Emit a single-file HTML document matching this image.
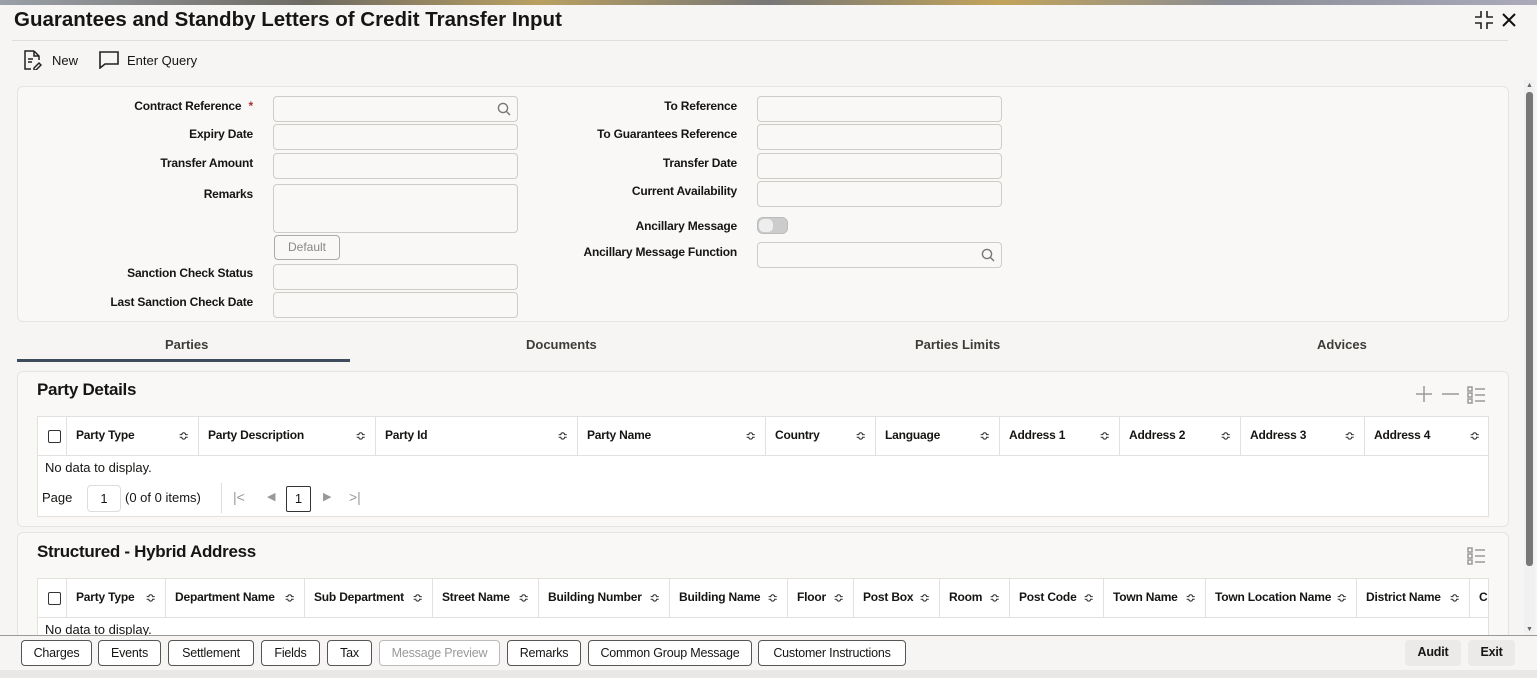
<!DOCTYPE html>
<html><head><meta charset="utf-8"><style>
*{box-sizing:border-box;margin:0;padding:0}
body{width:1537px;height:678px;overflow:hidden;background:#f6f5f3;font-family:"Liberation Sans",sans-serif;color:#161513;position:relative;font-size:12.5px}
.a{position:absolute}
.top{left:0;top:0;width:1537px;height:5px;background:linear-gradient(90deg,#9aa0a8,#6d6a62 20%,#b9a061 35%,#777 50%,#c2a35a 65%,#8a8d94 80%,#aab)}
h1{position:absolute;left:14px;top:8px;font-size:20.5px;font-weight:bold;letter-spacing:0;color:#161513}
.panel{position:absolute;background:#f9f8f6;border:1px solid #e6e4e0;border-radius:6px}
.lbl{position:absolute;text-align:right;font-weight:bold;font-size:12px;letter-spacing:-0.2px;white-space:nowrap}
.inp{position:absolute;background:#f9f8f6;border:1px solid #cfccc7;border-radius:4px;height:26px}
.tab{position:absolute;top:337px;font-weight:bold;font-size:13px;color:#3f3c38}
.tbl{position:absolute;background:#fff;border:1px solid #e3e1dd}
.th{position:absolute;top:0;height:38px;border-right:1px solid #e3e1dd;font-weight:bold;font-size:12px;letter-spacing:-0.2px;line-height:37px;padding-left:9px;white-space:nowrap;overflow:hidden}
.sort{position:absolute;right:9px;top:0;font-size:13px;color:#333;font-weight:normal}
.btn{position:absolute;top:640px;height:26px;border:1px solid #555;border-radius:4px;background:#fff;font-size:12.5px;text-align:center;line-height:24px;letter-spacing:-0.2px}
.cb{position:absolute;width:13px;height:13px;border:1.5px solid #333;border-radius:2px;background:#fff}
</style></head><body>
<div class="a top"></div>
<h1>Guarantees and Standby Letters of Credit Transfer Input</h1>
<svg class="a" style="left:1474px;top:10px" width="20" height="20" viewBox="0 0 20 20" fill="none" stroke="#222" stroke-width="1.6"><path d="M7 1v6H1M13 1v6h6M7 19v-6H1M13 19v-6h6"/></svg>
<svg class="a" style="left:1502px;top:13px" width="14" height="14" viewBox="0 0 14 14" stroke="#111" stroke-width="2"><path d="M1 1l12 12M13 1L1 13"/></svg>
<div class="a" style="left:12px;top:40px;width:1496px;height:1px;background:#e0deda"></div>
<svg class="a" style="left:22px;top:50px" width="20" height="20" viewBox="0 0 20 20" fill="none" stroke="#222" stroke-width="1.5"><path d="M12 1H3v18h6M12 1l5 5v4M12 1v5h5M6 9h5M6 12h4M12 18l5-5 2 2-5 5h-2z"/></svg>
<div class="a" style="left:52px;top:53px;font-size:13px">New</div>
<svg class="a" style="left:99px;top:51px" width="20" height="18" viewBox="0 0 20 18" fill="none" stroke="#222" stroke-width="1.6"><path d="M1 1h18v12H6l-5 4z"/></svg>
<div class="a" style="left:127px;top:53px;font-size:13px">Enter Query</div>

<div class="panel" style="left:17px;top:86px;width:1492px;height:236px"></div>
<div class="lbl" style="right:1284px;top:99px">Contract Reference <span style="color:#a33;margin-left:4px">*</span></div>
<div class="lbl" style="right:1284px;top:127px">Expiry Date</div>
<div class="lbl" style="right:1284px;top:156px">Transfer Amount</div>
<div class="lbl" style="right:1284px;top:187px">Remarks</div>
<div class="lbl" style="right:1284px;top:266px">Sanction Check Status</div>
<div class="lbl" style="right:1284px;top:295px">Last Sanction Check Date</div>
<div class="inp" style="left:273px;top:96px;width:245px"></div>
<svg class="a" style="left:497px;top:102px" width="14" height="14" viewBox="0 0 14 14" fill="none" stroke="#777" stroke-width="1.4"><circle cx="6" cy="6" r="4.6"/><path d="M9.5 9.5L13 13"/></svg>
<div class="inp" style="left:273px;top:124px;width:245px"></div>
<div class="inp" style="left:273px;top:153px;width:245px"></div>
<div class="inp" style="left:273px;top:184px;width:245px;height:49px"></div>
<div class="a" style="left:274px;top:235px;width:66px;height:25px;border:1px solid #aaa;border-radius:4px;color:#888;font-size:12px;text-align:center;line-height:23px">Default</div>
<div class="inp" style="left:273px;top:264px;width:245px"></div>
<div class="inp" style="left:273px;top:292px;width:245px"></div>

<div class="lbl" style="right:800px;top:99px">To Reference</div>
<div class="lbl" style="right:800px;top:127px">To Guarantees Reference</div>
<div class="lbl" style="right:800px;top:156px">Transfer Date</div>
<div class="lbl" style="right:800px;top:184px">Current Availability</div>
<div class="lbl" style="right:800px;top:219px">Ancillary Message</div>
<div class="lbl" style="right:800px;top:245px">Ancillary Message Function</div>
<div class="inp" style="left:757px;top:96px;width:245px"></div>
<div class="inp" style="left:757px;top:124px;width:245px"></div>
<div class="inp" style="left:757px;top:153px;width:245px"></div>
<div class="inp" style="left:757px;top:181px;width:245px"></div>
<div class="a" style="left:757px;top:217px;width:31px;height:17px;border-radius:6px;background:#ccc;border:1px solid #bbb"><div style="position:absolute;left:1px;top:1px;width:14px;height:13px;border-radius:5px;background:#eee"></div></div>
<div class="inp" style="left:757px;top:242px;width:245px"></div>
<svg class="a" style="left:981px;top:248px" width="14" height="14" viewBox="0 0 14 14" fill="none" stroke="#777" stroke-width="1.4"><circle cx="6" cy="6" r="4.6"/><path d="M9.5 9.5L13 13"/></svg>

<div class="tab" style="left:165px">Parties</div>
<div class="tab" style="left:526px">Documents</div>
<div class="tab" style="left:915px">Parties Limits</div>
<div class="tab" style="left:1317px">Advices</div>
<div class="a" style="left:17px;top:359px;width:333px;height:3px;background:#3d4b5c"></div>

<div class="panel" style="left:17px;top:371px;width:1492px;height:156px"></div>
<div class="a" style="left:37px;top:380px;font-size:17px;font-weight:bold;letter-spacing:-0.3px">Party Details</div>
<svg class="a" style="left:1414px;top:384px" width="74" height="20" viewBox="0 0 74 20" fill="none" stroke="#999" stroke-width="1.5"><path d="M10 2v16M2 10h16M28 10h17M54 3h4v4h-4zM54 9h4v4h-4zM54 15h4v4h-4zM61 5h10M61 11h10M61 17h10"/></svg>
<div class="tbl" style="left:37px;top:416px;width:1452px;height:101px">
<div class="th" style="left:0;width:29px"></div>
<div class="th" style="left:29px;width:132px">Party Type<span class="sort">≎</span></div>
<div class="th" style="left:161px;width:177px">Party Description<span class="sort">≎</span></div>
<div class="th" style="left:338px;width:202px">Party Id<span class="sort">≎</span></div>
<div class="th" style="left:540px;width:188px">Party Name<span class="sort">≎</span></div>
<div class="th" style="left:728px;width:110px">Country<span class="sort">≎</span></div>
<div class="th" style="left:838px;width:124px">Language<span class="sort">≎</span></div>
<div class="th" style="left:962px;width:120px">Address 1<span class="sort">≎</span></div>
<div class="th" style="left:1082px;width:121px">Address 2<span class="sort">≎</span></div>
<div class="th" style="left:1203px;width:124px">Address 3<span class="sort">≎</span></div>
<div class="th" style="left:1327px;width:124px;border-right:none">Address 4<span class="sort">≎</span></div>
<div class="a" style="left:0;top:38px;width:1450px;height:1px;background:#e3e1dd"></div>
<div class="cb" style="left:10px;top:13px"></div>
<div class="a" style="left:7px;top:43px;font-size:13px">No data to display.</div>
<div class="a" style="left:4px;top:73px;font-size:13px">Page</div>
<div class="a" style="left:49px;top:68px;width:34px;height:27px;border:1px solid #ddd;border-radius:4px;text-align:center;line-height:25px;font-size:13px">1</div>
<div class="a" style="left:87px;top:73px;font-size:13px">(0 of 0 items)</div>
<div class="a" style="left:183px;top:66px;width:1px;height:30px;background:#ddd"></div>
<div class="a" style="left:195px;top:72px;color:#999;font-size:14px">|&lt;</div>
<div class="a" style="left:229px;top:73px;color:#999;font-size:11px">◀</div>
<div class="a" style="left:248px;top:69px;width:25px;height:26px;border:1px solid #333;border-radius:2px;text-align:center;line-height:24px;font-size:13px">1</div>
<div class="a" style="left:285px;top:73px;color:#999;font-size:11px">▶</div>
<div class="a" style="left:311px;top:72px;color:#999;font-size:14px">&gt;|</div>
</div>

<div class="panel" style="left:17px;top:532px;width:1492px;height:110px"></div>
<div class="a" style="left:37px;top:542px;font-size:17px;font-weight:bold;letter-spacing:-0.3px">Structured - Hybrid Address</div>
<svg class="a" style="left:1467px;top:546px" width="20" height="20" viewBox="0 0 20 20" fill="none" stroke="#999" stroke-width="1.5"><path d="M1 2h4v4H1zM1 8h4v4H1zM1 14h4v4H1zM8 4h10M8 10h10M8 16h10"/></svg>
<div class="tbl" style="left:37px;top:578px;width:1452px;height:60px;overflow:hidden">
<div class="th" style="left:0;width:29px"></div>
<div class="th" style="left:29px;width:99px">Party Type<span class="sort">≎</span></div>
<div class="th" style="left:128px;width:139px">Department Name<span class="sort">≎</span></div>
<div class="th" style="left:267px;width:128px">Sub Department<span class="sort">≎</span></div>
<div class="th" style="left:395px;width:106px">Street Name<span class="sort">≎</span></div>
<div class="th" style="left:501px;width:131px">Building Number<span class="sort">≎</span></div>
<div class="th" style="left:632px;width:118px">Building Name<span class="sort">≎</span></div>
<div class="th" style="left:750px;width:66px">Floor<span class="sort">≎</span></div>
<div class="th" style="left:816px;width:86px">Post Box<span class="sort">≎</span></div>
<div class="th" style="left:902px;width:70px">Room<span class="sort">≎</span></div>
<div class="th" style="left:972px;width:94px">Post Code<span class="sort">≎</span></div>
<div class="th" style="left:1066px;width:102px">Town Name<span class="sort">≎</span></div>
<div class="th" style="left:1168px;width:151px">Town Location Name<span class="sort">≎</span></div>
<div class="th" style="left:1319px;width:113px">District Name<span class="sort">≎</span></div>
<div class="th" style="left:1432px;width:40px;border-right:none">Co</div>
<div class="a" style="left:0;top:38px;width:1450px;height:1px;background:#e3e1dd"></div>
<div class="cb" style="left:10px;top:13px"></div>
<div class="a" style="left:7px;top:43px;font-size:13px">No data to display.</div>
</div>

<div class="a" style="left:1524px;top:80px;width:11px;height:556px;background:#f1f1f1"></div>
<div class="a" style="left:1526px;top:92px;width:7px;height:474px;background:#777;border-radius:3px"></div>
<div class="a" style="left:1526px;top:82px;font-size:7px;color:#666">▲</div>
<div class="a" style="left:1526px;top:626px;font-size:7px;color:#666">▼</div>

<div class="a" style="left:0;top:635px;width:1537px;height:35px;background:#f6f5f3;border-top:1px solid #999"></div>
<div class="btn" style="left:21px;width:71px">Charges</div>
<div class="btn" style="left:98px;width:63px">Events</div>
<div class="btn" style="left:168px;width:86px">Settlement</div>
<div class="btn" style="left:261px;width:59px">Fields</div>
<div class="btn" style="left:327px;width:45px">Tax</div>
<div class="btn" style="left:379px;width:121px;border-color:#bbb;color:#999">Message Preview</div>
<div class="btn" style="left:507px;width:74px">Remarks</div>
<div class="btn" style="left:588px;width:164px">Common Group Message</div>
<div class="btn" style="left:758px;width:148px">Customer Instructions</div>
<div class="btn" style="left:1405px;width:56px;border:none;background:#ebeae8;font-weight:bold">Audit</div>
<div class="btn" style="left:1468px;width:47px;border:none;background:#ebeae8;font-weight:bold">Exit</div>
<div class="a" style="left:0;top:670px;width:1537px;height:8px;background:#e9e8e6"></div>
</body></html>
